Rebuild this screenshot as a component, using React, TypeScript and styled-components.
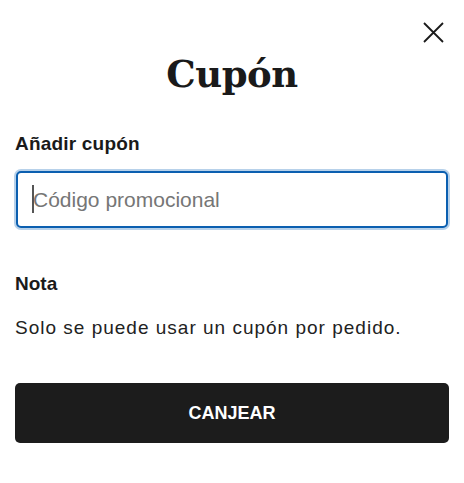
import React from 'react'
import styled, { createGlobalStyle } from 'styled-components'

const GlobalStyle = createGlobalStyle`
    html, body {
        margin: 0;
        padding: 0;
        background: #ffffff;
    }
    * {
        box-sizing: border-box;
    }
`

const Dialog = styled.div`
    position: relative;
    width: 464px;
    height: 483px;
    padding: 52px 15px 0;
    background: #ffffff;
    font-family: "Liberation Sans", Arial, sans-serif;
    color: #1a1a1a;
`

const CloseButton = styled.button`
    position: absolute;
    top: 22px;
    right: 20px;
    width: 21px;
    height: 21px;
    padding: 0;
    border: none;
    background: none;
    cursor: pointer;
    color: #1a1a1a;
`

const Title = styled.h1`
    margin: 0;
    font-family: "DejaVu Serif", "Liberation Serif", serif;
    font-weight: 700;
    font-size: 37px;
    line-height: 44px;
    text-align: center;
    letter-spacing: -0.5px;
`

const Label = styled.label`
    display: block;
    margin-top: 36px;
    font-size: 19px;
    line-height: 24px;
    font-weight: 700;
    letter-spacing: 0.2px;
`

const InputWrap = styled.div`
    position: relative;
    margin: 15px 1px 0;
`

const Input = styled.input`
    display: block;
    width: 100%;
    height: 57px;
    padding: 0 15px;
    border: 2px solid #0b5fb0;
    border-radius: 5px;
    box-shadow: 0 0 0 2px #b7d1ea;
    outline: none;
    font-family: "Liberation Sans", Arial, sans-serif;
    font-size: 21px;
    color: #1a1a1a;
    caret-color: transparent;

    &::placeholder {
        color: #767676;
    }
`

const Caret = styled.span`
    position: absolute;
    left: 16px;
    top: 14px;
    width: 1.5px;
    height: 28px;
    background: #555555;
    pointer-events: none;
`

const SectionTitle = styled.h2`
    margin: 44px 0 0;
    font-size: 19px;
    line-height: 24px;
    font-weight: 700;
`

const Note = styled.p`
    margin: 20px 0 0;
    font-size: 19px;
    line-height: 24px;
    letter-spacing: 1px;
    color: #222222;
`

const SubmitButton = styled.button`
    display: flex;
    align-items: center;
    justify-content: center;
    width: 100%;
    height: 60px;
    margin-top: 43px;
    border: none;
    border-radius: 5px;
    background: #1c1c1c;
    color: #ffffff;
    font-family: "Liberation Sans", Arial, sans-serif;
    font-size: 18px;
    font-weight: 700;
    text-transform: uppercase;
    cursor: pointer;
`

const App = (): React.ReactElement => (
    <>
        <GlobalStyle />
        <Dialog>
            <CloseButton aria-label="Cerrar">
                <svg width="21" height="21" viewBox="0 0 21 21" fill="none">
                    <path d="M1 1L20 20M20 1L1 20" stroke="currentColor" strokeWidth="1.8" />
                </svg>
            </CloseButton>
            <Title>Cupón</Title>
            <Label htmlFor="coupon">Añadir cupón</Label>
            <InputWrap>
                <Input id="coupon" placeholder="Código promocional" />
                <Caret />
            </InputWrap>
            <SectionTitle>Nota</SectionTitle>
            <Note>Solo se puede usar un cupón por pedido.</Note>
            <SubmitButton>Canjear</SubmitButton>
        </Dialog>
    </>
)

export default App
